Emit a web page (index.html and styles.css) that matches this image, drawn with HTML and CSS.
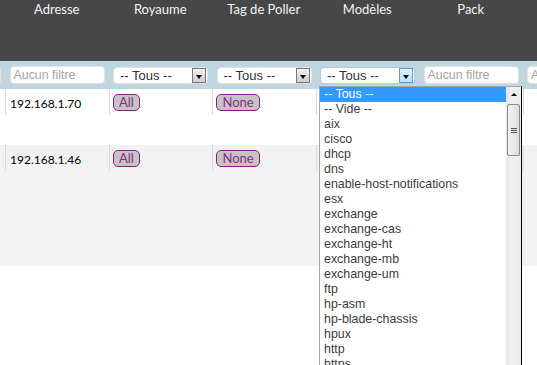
FILE: index.html
```html
<!DOCTYPE html>
<html lang="fr">
<head>
<meta charset="utf-8">
<link rel="stylesheet" href="styles.css">
</head>
<body>
<div class="page">
  <div class="grid head">
    <div class="th"></div>
    <div class="th">Adresse</div>
    <div class="th">Royaume</div>
    <div class="th">Tag de Poller</div>
    <div class="th">Modèles</div>
    <div class="th">Pack</div>
    <div class="th"></div>
  </div>
  <div class="grid filters">
    <div class="fc"><div class="inp"><span class="ph">Aucun filtre</span></div></div>
    <div class="fc"><div class="inp"><span class="ph">Aucun filtre</span></div></div>
    <div class="fc"><div class="sel"><span>-- Tous --</span><span class="btn"><i class="tri"></i></span></div></div>
    <div class="fc"><div class="sel"><span>-- Tous --</span><span class="btn"><i class="tri"></i></span></div></div>
    <div class="fc"><div class="sel focus"><span>-- Tous --</span><span class="btn"><i class="tri"></i></span></div></div>
    <div class="fc"><div class="inp"><span class="ph">Aucun filtre</span></div></div>
    <div class="fc"><div class="inp"><span class="ph">Aucun filtre</span></div></div>
  </div>
  <div class="row r1">
    <div class="grid cells">
      <div class="td first"></div>
      <div class="td ip">192.168.1.70</div>
      <div class="td"><span class="badge">All</span></div>
      <div class="td"><span class="badge">None</span></div>
      <div class="td"></div>
      <div class="td"></div>
      <div class="td"></div>
    </div>
  </div>
  <div class="row r2">
    <div class="grid cells">
      <div class="td first"></div>
      <div class="td ip">192.168.1.46</div>
      <div class="td"><span class="badge">All</span></div>
      <div class="td"><span class="badge">None</span></div>
      <div class="td"></div>
      <div class="td"></div>
      <div class="td"></div>
    </div>
  </div>
</div>

<div class="dropdown">
  <ul class="opts">
    <li class="hl">-- Tous --</li>
    <li>-- Vide --</li>
    <li>aix</li>
    <li>cisco</li>
    <li>dhcp</li>
    <li>dns</li>
    <li>enable-host-notifications</li>
    <li>esx</li>
    <li>exchange</li>
    <li>exchange-cas</li>
    <li>exchange-ht</li>
    <li>exchange-mb</li>
    <li>exchange-um</li>
    <li>ftp</li>
    <li>hp-asm</li>
    <li>hp-blade-chassis</li>
    <li>hpux</li>
    <li>http</li>
    <li>https</li>
  </ul>
  <div class="sbar">
    <div class="up"><i></i></div>
    <div class="thumb"><span></span><span></span><span></span></div>
  </div>
</div>
</body>
</html>
```

FILE: styles.css
```css
html, body {
  margin: 0;
  padding: 0;
  background: #ffffff;
  overflow: hidden;
  width: 537px;
  height: 365px;
}
body {
  position: relative;
  font-family: Lato, "Open Sans", sans-serif;
}
.page {
  margin-left: -98.5px;
  width: 724.5px;
}
.grid {
  display: grid;
  grid-template-columns: repeat(7, 103.5px);
}
.head {
  height: 61px;
  background: #474747;
}
.th {
  color: #f4f4f4;
  font-size: 13px;
  line-height: 17px;
  text-align: center;
  padding-top: 1px;
}
.filters {
  height: 28px;
  background: #bfd6e1;
  align-items: start;
}
.fc {
  padding: 5px 0 0 4.5px;
}
.inp, .sel {
  box-sizing: border-box;
  width: 95px;
  height: 18px;
  background: #fff;
  border: 1px solid #e2e2e2;
  border-radius: 4px;
  font-family: "Liberation Sans", Arial, sans-serif;
  font-size: 12.4px;
  line-height: 16px;
  display: flex;
  align-items: center;
}
.ph {
  color: #a4a4a4;
  padding-left: 3px;
}
.sel {
  margin-top: 1px;
  height: 17px;
  color: #333;
  font-size: 13px;
  justify-content: space-between;
  padding-left: 6px;
  padding-right: 1px;
}
.btn {
  box-sizing: border-box;
  width: 14px;
  height: 15px;
  border: 1px solid #777;
  background: linear-gradient(#f0f0f0, #cfcfcf);
  display: flex;
  align-items: center;
  justify-content: center;
}
.tri {
  width: 0;
  height: 0;
  border-left: 3.5px solid transparent;
  border-right: 3.5px solid transparent;
  border-top: 4px solid #000;
  margin-top: 2px;
}
.sel.focus {
  border-color: #a9cdec;
  box-shadow: 0 0 1px #8ec0ea;
}
.sel.focus .btn {
  border-color: #5b9fd9;
  background: linear-gradient(#e3f0fb, #c4dff5);
}
.row.r1 {
  height: 56px;
  background: #ffffff;
}
.row.r2 {
  height: 121px;
  background: #f2f2f2;
}
.cells {
  height: 26px;
}
.td {
  border-left: 1px solid #d9d9d9;
  padding: 5px 0 0 3px;
  box-sizing: border-box;
  display: flex;
  align-items: flex-start;
}
.td.first {
  border-left: none;
}
.ip {
  padding: 8px 0 0 4px;
  font-size: 12px;
  line-height: 14px;
  color: #000;
}
.badge {
  display: block;
  box-sizing: border-box;
  height: 17px;
  padding: 0 5.5px;
  border: 1.5px solid #8e1a8e;
  border-radius: 5px;
  background: #c4c4c4;
  color: #8a2a8a;
  font-size: 13px;
  line-height: 14px;
}
.dropdown {
  position: absolute;
  left: 319px;
  top: 86px;
  width: 203px;
  height: 300px;
  box-sizing: border-box;
  border: 1px solid #a5a5a5;
  border-right: 1px solid #000;
  background: #fff;
  display: flex;
}
.opts {
  list-style: none;
  margin: 0;
  padding: 0;
  flex: 1;
  font-family: "Liberation Sans", Arial, sans-serif;
  font-size: 12.4px;
  line-height: 15px;
  color: #3c3c3c;
}
.opts li {
  height: 15px;
  padding-left: 4px;
  white-space: nowrap;
}
.opts li.hl {
  background: #3399ff;
  color: #fff;
}
.sbar {
  width: 15px;
  background: linear-gradient(90deg, #e6e6e6, #f0f0f0 40%, #ececec);
  position: relative;
}
.up {
  height: 15px;
  display: flex;
  align-items: center;
  justify-content: center;
}
.up i {
  width: 0;
  height: 0;
  border-left: 3px solid transparent;
  border-right: 3px solid transparent;
  border-bottom: 3px solid #000;
}
.thumb {
  box-sizing: border-box;
  margin: 2px 1px 0 1px;
  height: 52px;
  border: 1px solid #8a8a8a;
  border-radius: 2px;
  background: linear-gradient(90deg, #f4f4f4, #dcdcdc);
  display: flex;
  flex-direction: column;
  align-items: center;
  justify-content: center;
  gap: 1px;
}
.thumb span {
  width: 6px;
  height: 1px;
  background: #555;
}
```
